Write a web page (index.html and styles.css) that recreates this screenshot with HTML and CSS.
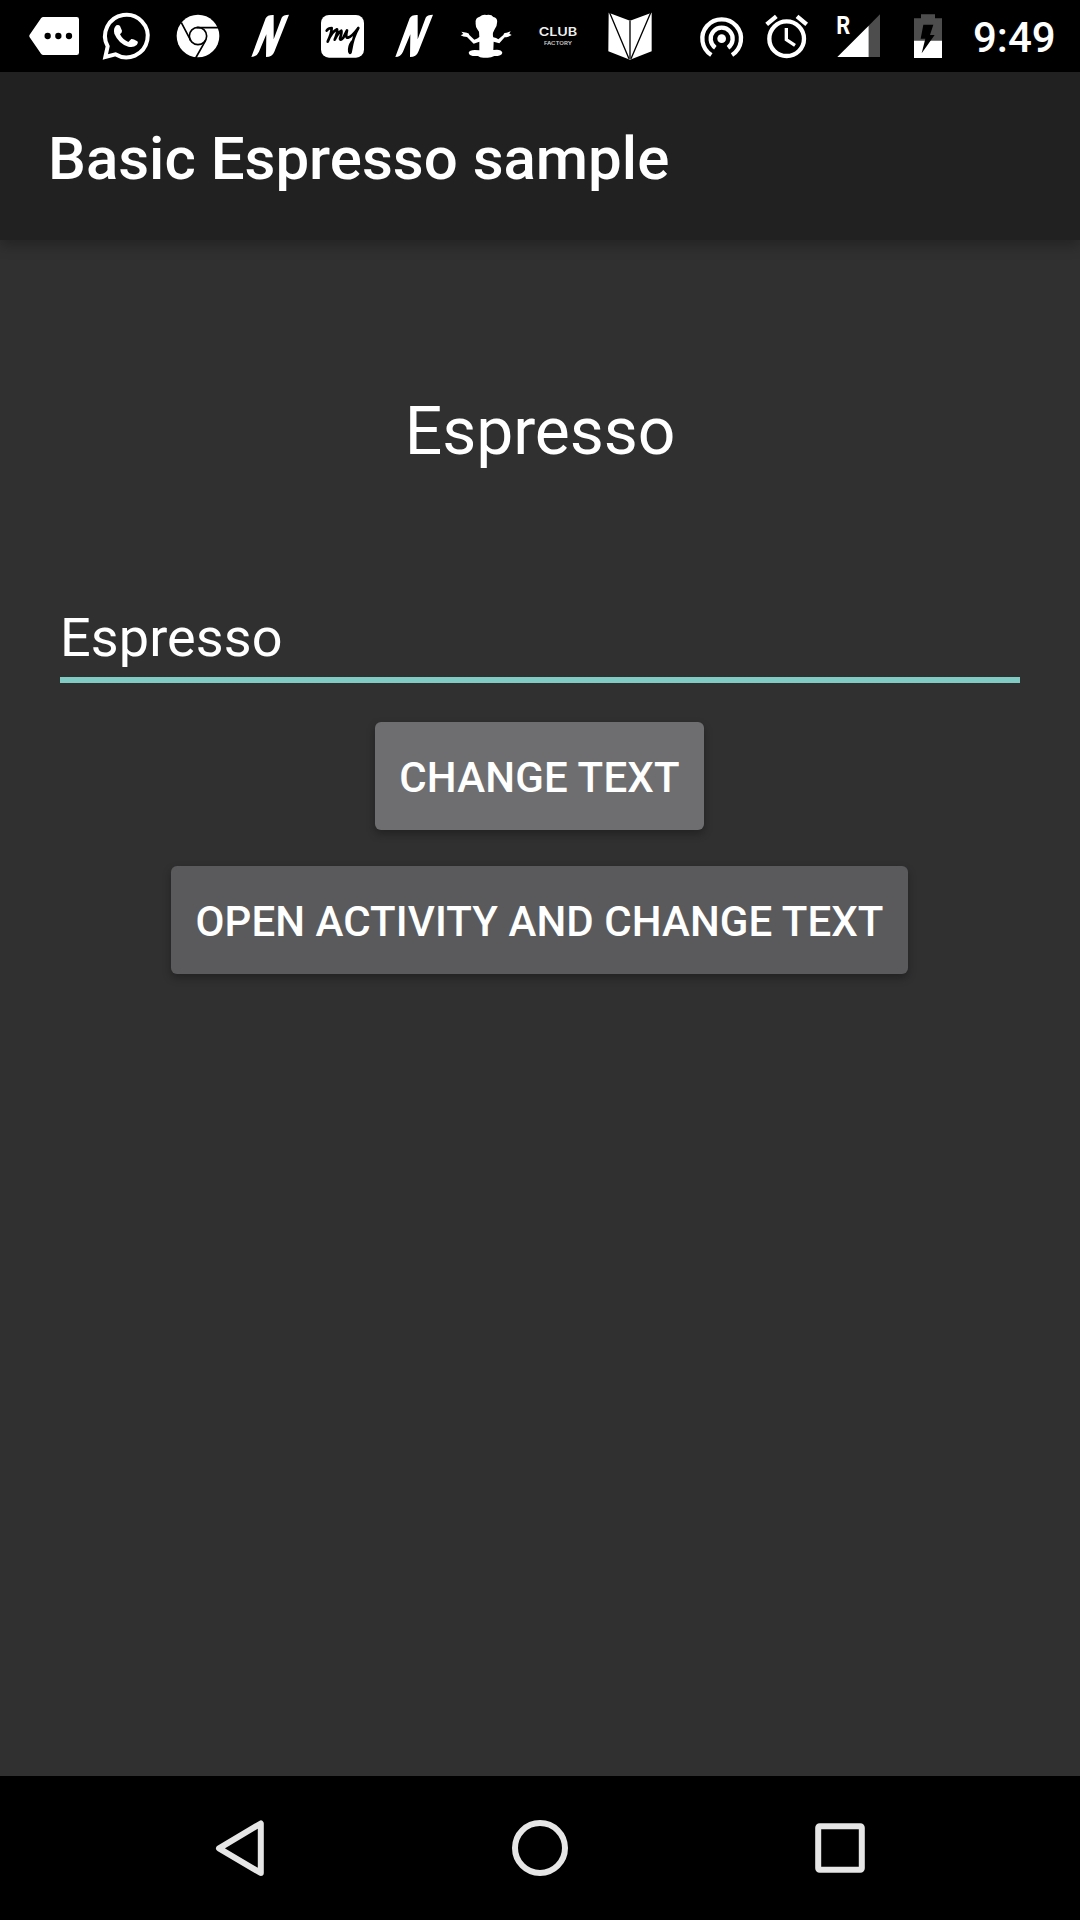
FILE: index.html
```html
<!DOCTYPE html>
<html lang="en">
<head>
<meta charset="utf-8">
<title>Basic Espresso sample</title>
<link rel="stylesheet" href="styles.css">
</head>
<body>
<div class="screen">
  <header class="status-bar">
    <div class="notifications">
      <svg class="icon" viewBox="-6 0 216 216">
        <path fill="#fff" d="M70 51H170Q177 51 177 58V158Q177 165 170 165H70Q66 165 63 161L29 112Q26 108 29 104L63 55Q66 51 70 51Z"/>
        <circle cx="83" cy="108" r="9.5"/><circle cx="115" cy="108" r="9.5"/><circle cx="147" cy="108" r="9.5"/>
      </svg>
      <svg class="icon" viewBox="210 0 216 216">
        <path fill="none" stroke="#fff" stroke-width="12" d="M256 171L263 139A64 64 0 1 1 286 163Z"/>
        <path fill="#fff" d="M289 76Q296 73 300 78L306 92Q307 97 300 103Q308 119 325 126L334 117Q339 116 352 124Q356 128 350 135Q340 144 325 140Q296 131 283 101Q279 85 289 76Z"/>
      </svg>
      <svg class="icon" viewBox="426 0 216 216">
        <circle cx="534" cy="108" r="64" fill="#fff"/>
        <circle cx="534" cy="108" r="26" fill="none" stroke="#000" stroke-width="5"/>
        <path fill="none" stroke="#000" stroke-width="5" d="M530 83H600M484 68L512 121M557 121L527 174"/>
      </svg>
      <svg class="icon" viewBox="12 0 216 216">
        <path fill="#fff" d="M64 171L107 55Q112 44 131 45L131 118L155 53Q159 44 177 44L133 155Q127 171 108 171L109 103L87 155Q80 171 64 171Z"/>
      </svg>
      <svg class="icon" viewBox="228 0 216 216">
        <rect x="273" y="45" width="129" height="128" rx="24" fill="#fff"/>
        <path fill="none" stroke="#000" stroke-width="8" stroke-linecap="round" stroke-linejoin="round" d="M290 92Q295 84 305 84Q305 100 293 125Q306 94 321 88Q324 96 314 119Q325 96 334 92Q336 98 330 115Q330 124 340 113L351 91Q345 115 354 113Q366 110 385 84Q369 111 363 150Q361 165 358 154Q356 139 366 125"/>
      </svg>
      <svg class="icon" viewBox="12 0 216 216">
        <path fill="#fff" d="M64 171L107 55Q112 44 131 45L131 118L155 53Q159 44 177 44L133 155Q127 171 108 171L109 103L87 155Q80 171 64 171Z"/>
      </svg>
      <svg class="icon" viewBox="30 0 216 216">
        <path fill="#fff" d="M107 68Q105 54 119 50Q128 42 140 45Q155 43 160 51Q174 54 171 69Q171 80 164 88L159 98Q158 108 160 112Q169 114 175 118L190 105Q191 97 200 98L212 94L208 101L215 105L205 110Q198 112 194 112L178 130L161 125L160 150Q184 146 187 158Q186 168 163 168Q151 175 137 173Q120 175 114 168Q87 170 86 158Q89 147 118 151L118 125L101 131L81 111Q69 111 62 106L70 102L64 95L80 98Q88 99 88 105L103 119Q113 116 118 111L117 95L112 88Q106 80 107 68Z"/>
      </svg>
      <svg class="icon" viewBox="246 0 216 216">
        <text class="club" x="296" y="108" textLength="116" lengthAdjust="spacingAndGlyphs">CLUB</text>
        <text class="factory" x="312" y="134" textLength="84" lengthAdjust="spacingAndGlyphs">FACTORY</text>
      </svg>
      <svg class="icon" viewBox="462 0 216 216">
        <path fill="#fff" d="M506 38L570 62L635 38V154L570 179L505 154Z"/>
        <path fill="none" stroke="#000" stroke-width="4" d="M509 38L567 176M632 38L573 176"/>
        <path fill="none" stroke="#333" stroke-width="5" d="M570 62V178"/>
      </svg>
    </div>
    <div class="system">
      <svg class="icon-narrow" viewBox="27 0 198 216">
        <circle cx="125" cy="116" r="13" fill="#fff"/>
        <path fill="none" stroke="#fff" stroke-width="13" d="M106 143A33 33 0 1 1 144 143M94 165A58 58 0 1 1 156 165"/>
      </svg>
      <svg class="icon-narrow" viewBox="225 0 198 216">
        <circle cx="320" cy="116" r="52" fill="none" stroke="#fff" stroke-width="13"/>
        <path fill="none" stroke="#fff" stroke-width="13" d="M260 73L289 49M351 49L380 73"/>
        <path fill="none" stroke="#fff" stroke-width="10" d="M319 84V119L345 136"/>
      </svg>
      <svg class="icon" viewBox="423 0 216 216">
        <path fill="#4d4d4d" d="M600 43V171H566V77Z"/>
        <path fill="#fff" d="M472 171L566 77V171Z"/>
        <text class="roaming" x="469" y="101" textLength="42" lengthAdjust="spacingAndGlyphs">R</text>
      </svg>
      <svg class="icon-battery" viewBox="39 0 210 216">
        <path fill="#4d4d4d" d="M102 55H123V43H165V55H186V122H102Z"/>
        <path fill="#fff" d="M102 122H186V174H102Z"/>
        <path d="M130 74H160L150 105H164L125 160L136 116H122Z"/>
      </svg>
      <span class="clock">9:49</span>
    </div>
  </header>
  <div class="app-bar"><h1>Basic Espresso sample</h1></div>
  <main class="content">
    <p class="result">Espresso</p>
    <div class="field">Espresso</div>
    <button class="btn btn-pressed">CHANGE TEXT</button>
    <button class="btn btn-open">OPEN ACTIVITY AND CHANGE TEXT</button>
  </main>
  <nav class="nav-bar">
    <svg class="nav-icon" viewBox="0 0 100 144"><path d="M29 72.3L70.8 47.5V97Z"/></svg>
    <svg class="nav-icon" viewBox="0 0 100 144"><circle cx="50" cy="72" r="25"/></svg>
    <svg class="nav-icon" viewBox="0 0 100 144"><rect x="28.2" y="50.2" width="43.6" height="43.6" rx="1.5"/></svg>
  </nav>
</div>
</body>
</html>
```
FILE: styles.css
```css
* { box-sizing: border-box; }
body { margin: 0; background: #000; font-family: Roboto, sans-serif; color: #fff; }
.screen { width: 1080px; height: 1920px; display: flex; flex-direction: column; background: #303030; overflow: hidden; }

.status-bar { height: 72px; flex: none; background: #000; display: flex; justify-content: space-between; padding: 0 24px 0 18px; }
.notifications, .system { display: flex; }
.icon { width: 72px; height: 72px; flex: none; }
.icon-narrow { width: 66px; height: 72px; flex: none; }
.icon-battery { width: 70px; height: 72px; flex: none; }
.clock { width: 83px; margin-left: 10px; font-size: 42px; font-weight: 500; line-height: 75px; height: 72px; white-space: nowrap; }
.club { font: 600 35px Inter, sans-serif; fill: #eee; }
.factory { font: 600 15px Inter, sans-serif; fill: #ccc; }
.roaming { font: 700 79px Roboto, sans-serif; fill: #fff; }

.app-bar { height: 168px; flex: none; background: #212121; display: flex; align-items: center; padding: 5px 48px 0; box-shadow: 0 6px 12px rgba(0, 0, 0, .25); }
h1 { margin: 0; font-size: 60px; font-weight: 500; line-height: 70px; }

.content { flex: 1; display: flex; flex-direction: column; align-items: center; padding: 152px 60px 0; }
.result { margin: 0; font-size: 66px; line-height: 80px; letter-spacing: -.1px; }
.field { width: 100%; height: 83px; margin-top: 128px; border-bottom: 6px solid #80cbc4; font-size: 54px; line-height: 75px; letter-spacing: .1px; }
.btn { height: 108px; border: 0; border-radius: 6px; margin: 36px 1px 0 0; padding: 3px 0 0; background: #5a5a5c; color: #fff; font: 500 42px/50px Roboto, sans-serif; white-space: nowrap; box-shadow: 0 4px 8px rgba(0, 0, 0, .3); }
.btn-pressed { width: 329px; background: #6e6e70; margin-top: 39px; letter-spacing: .2px; }
.btn-open { width: 737px; letter-spacing: .07px; }

.nav-bar { height: 144px; flex: none; background: #000; display: flex; justify-content: center; gap: 200px; }
.nav-icon { width: 100px; height: 144px; fill: none; stroke: #e6e6e6; stroke-width: 6; stroke-linejoin: round; }
```
